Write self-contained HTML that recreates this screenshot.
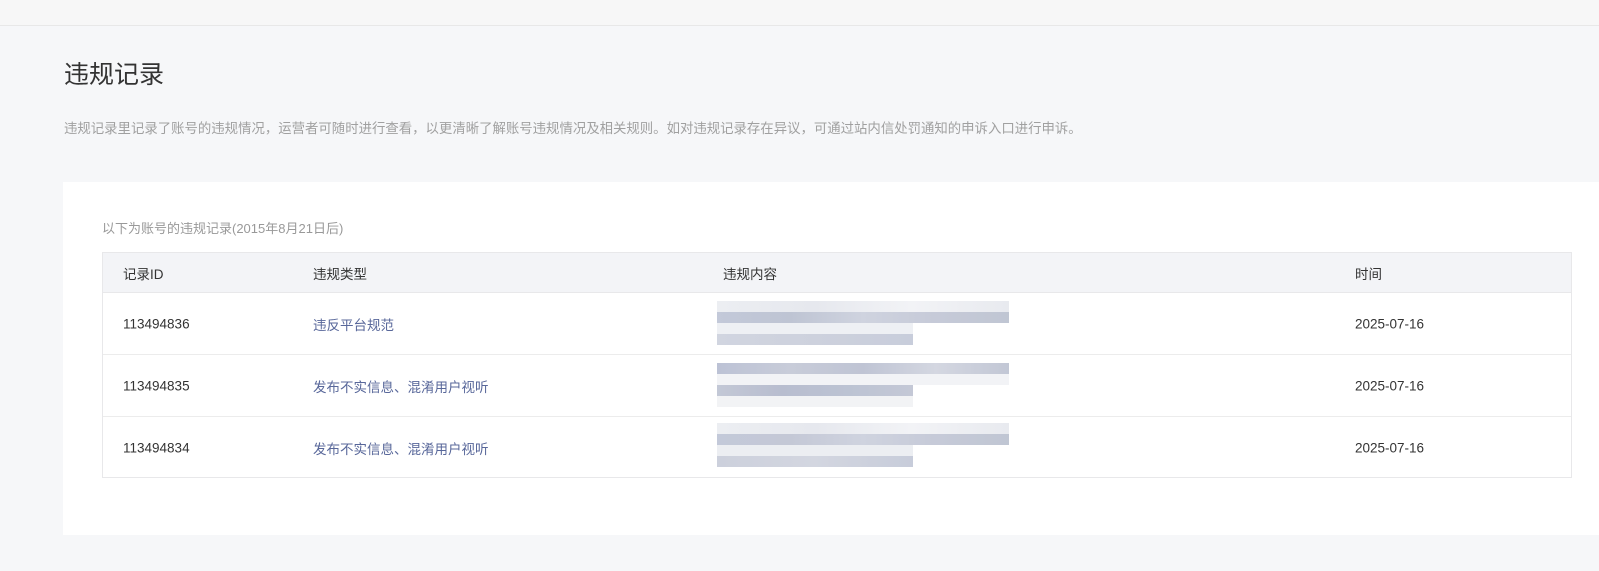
<!DOCTYPE html>
<html><head><meta charset="utf-8"><style>
*{margin:0;padding:0;box-sizing:border-box}
body{width:1599px;height:571px;background:#f6f7f9;font-family:"Liberation Sans","Noto Sans CJK SC",sans-serif;position:relative;overflow:hidden;color:#333}
.top{position:absolute;left:0;top:0;width:1599px;height:26px;background:#f7f7f7;border-bottom:1px solid #e8e8e8}
.title{position:absolute;left:64px;top:55px;font-size:25px;color:#333}
.desc{position:absolute;left:64px;top:117px;font-size:13.4px;color:#a0a0a0;white-space:nowrap}
.card{position:absolute;left:63px;top:182px;width:1536px;height:353px;background:#fff}
.sub{position:absolute;left:102px;top:218px;font-size:13px;color:#999}
.tbl{position:absolute;left:102px;top:252px;width:1470px;height:226px;border:1px solid #e8e8ea}
.row{position:absolute;left:0;width:100%;font-size:13.5px}
.hd{top:0;height:40px;background:#f3f4f7;border-bottom:1px solid #e8e8ea}
.c{position:absolute;top:50%;transform:translateY(-50%);white-space:nowrap}
.r{height:62px;border-bottom:1px solid #ececec}
.lnk{color:#58679a}
.blur{position:absolute;left:614px;height:44px;width:292px}
.blur div{height:11px}
</style></head><body>
<div class="top"></div>
<div class="title">违规记录</div>
<div class="desc">违规记录里记录了账号的违规情况，运营者可随时进行查看，以更清晰了解账号违规情况及相关规则。如对违规记录存在异议，可通过站内信处罚通知的申诉入口进行申诉。</div>
<div class="card"></div>
<div class="sub">以下为账号的违规记录(2015年8月21日后)</div>
<div class="tbl">
 <div class="row hd"><span class="c" style="left:20px">记录ID</span><span class="c" style="left:210px">违规类型</span><span class="c" style="left:620px">违规内容</span><span class="c" style="left:1252px">时间</span></div>
 <div class="row r" style="top:40px"><span class="c" style="left:20px">113494836</span><span class="c lnk" style="left:210px">违反平台规范</span><span class="c" style="left:1252px">2025-07-16</span>
  <div class="blur" style="top:8px"><div style="background:linear-gradient(90deg,#eceef2,#e6e8ee,#f2f3f6,#e8eaef)"></div><div style="background:linear-gradient(90deg,#c3c9d9,#bec4d3,#cfd3df,#c6cad8,#c0c6d3)"></div><div style="width:196px;background:#eef0f4"></div><div style="width:196px;background:linear-gradient(90deg,#d1d5e0,#cdd1dd,#c8cddb)"></div></div></div>
 <div class="row r" style="top:102px"><span class="c" style="left:20px">113494835</span><span class="c lnk" style="left:210px">发布不实信息、混淆用户视听</span><span class="c" style="left:1252px">2025-07-16</span>
  <div class="blur" style="top:8px"><div style="background:linear-gradient(90deg,#bcc2d5,#c8ccd9,#bfc4d4,#d4d7e1,#c2c7d5)"></div><div style="background:#f2f3f6"></div><div style="width:196px;background:linear-gradient(90deg,#c3c8d6,#b8bdcf,#bcc3d3,#c4c8d6)"></div><div style="width:196px;background:#f2f3f5"></div></div></div>
 <div class="row r" style="top:164px;border-bottom:none"><span class="c" style="left:20px">113494834</span><span class="c lnk" style="left:210px">发布不实信息、混淆用户视听</span><span class="c" style="left:1252px">2025-07-16</span>
  <div class="blur" style="top:6px"><div style="background:linear-gradient(90deg,#eceef2,#e6e8ee,#f2f3f6,#e8eaef)"></div><div style="background:linear-gradient(90deg,#c3c9d9,#c4c8d6,#cfd3df,#c6cad8,#c0c6d3)"></div><div style="width:196px;background:#eceef2"></div><div style="width:196px;background:linear-gradient(90deg,#ccd0dc,#d3d6e0,#c7ccda)"></div></div></div>
</div>
</body></html>
